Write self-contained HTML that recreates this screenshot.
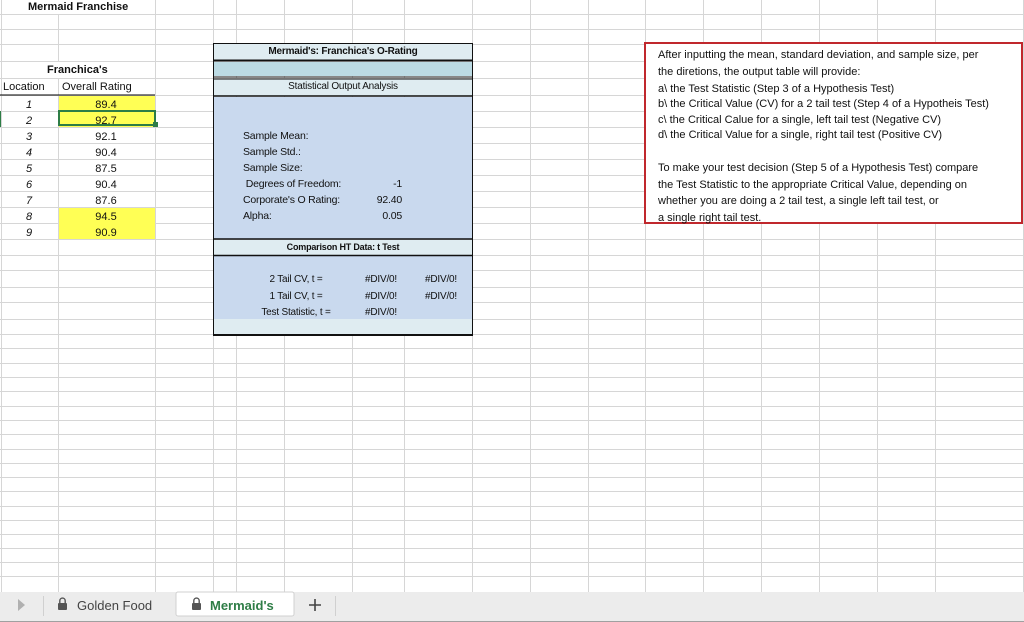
<!DOCTYPE html>
<html><head><meta charset="utf-8"><style>
body{margin:0;width:1024px;height:622px;position:relative;overflow:hidden;background:#fff;font-family:"Liberation Sans",Arial,sans-serif;}
.t{position:absolute;font-size:11px;color:#111;white-space:nowrap;line-height:12px}
.c{font-family:"Liberation Sans",sans-serif;font-size:10px;letter-spacing:-0.2px}
.ctr{text-align:center}
</style></head><body>
<svg width="1024" height="622" style="position:absolute;left:0;top:0">
<g stroke="#d6d6d6" stroke-width="1">
<line x1="1.5" y1="0" x2="1.5" y2="592"/>
<line x1="58.5" y1="0" x2="58.5" y2="592"/>
<line x1="155.5" y1="0" x2="155.5" y2="592"/>
<line x1="213.5" y1="0" x2="213.5" y2="592"/>
<line x1="236.5" y1="0" x2="236.5" y2="592"/>
<line x1="284.5" y1="0" x2="284.5" y2="592"/>
<line x1="352.5" y1="0" x2="352.5" y2="592"/>
<line x1="404.5" y1="0" x2="404.5" y2="592"/>
<line x1="472.5" y1="0" x2="472.5" y2="592"/>
<line x1="530.5" y1="0" x2="530.5" y2="592"/>
<line x1="588.5" y1="0" x2="588.5" y2="592"/>
<line x1="645.5" y1="0" x2="645.5" y2="592"/>
<line x1="703.5" y1="0" x2="703.5" y2="592"/>
<line x1="761.5" y1="0" x2="761.5" y2="592"/>
<line x1="819.5" y1="0" x2="819.5" y2="592"/>
<line x1="877.5" y1="0" x2="877.5" y2="592"/>
<line x1="935.5" y1="0" x2="935.5" y2="592"/>
<line x1="1023.5" y1="0" x2="1023.5" y2="592"/>
</g>
<g stroke="#d6d6d6" stroke-width="1">
<line x1="0" y1="14.5" x2="1024" y2="14.5"/><line x1="0" y1="29.5" x2="1024" y2="29.5"/><line x1="0" y1="44.5" x2="1024" y2="44.5"/><line x1="0" y1="61.5" x2="1024" y2="61.5"/><line x1="0" y1="78.5" x2="1024" y2="78.5"/><line x1="0" y1="95.5" x2="1024" y2="95.5"/><line x1="0" y1="111.5" x2="1024" y2="111.5"/><line x1="0" y1="127.5" x2="1024" y2="127.5"/><line x1="0" y1="143.5" x2="1024" y2="143.5"/><line x1="0" y1="159.5" x2="1024" y2="159.5"/><line x1="0" y1="175.5" x2="1024" y2="175.5"/><line x1="0" y1="191.5" x2="1024" y2="191.5"/><line x1="0" y1="207.5" x2="1024" y2="207.5"/><line x1="0" y1="223.5" x2="1024" y2="223.5"/><line x1="0" y1="239.5" x2="1024" y2="239.5"/><line x1="0" y1="255.5" x2="1024" y2="255.5"/><line x1="0" y1="270.5" x2="1024" y2="270.5"/><line x1="0" y1="287.5" x2="1024" y2="287.5"/><line x1="0" y1="302.5" x2="1024" y2="302.5"/><line x1="0" y1="319.5" x2="1024" y2="319.5"/><line x1="0" y1="334.5" x2="1024" y2="334.5"/><line x1="0" y1="348.5" x2="1024" y2="348.5"/><line x1="0" y1="363.5" x2="1024" y2="363.5"/><line x1="0" y1="377.5" x2="1024" y2="377.5"/><line x1="0" y1="391.5" x2="1024" y2="391.5"/><line x1="0" y1="406.5" x2="1024" y2="406.5"/><line x1="0" y1="420.5" x2="1024" y2="420.5"/><line x1="0" y1="434.5" x2="1024" y2="434.5"/><line x1="0" y1="449.5" x2="1024" y2="449.5"/><line x1="0" y1="463.5" x2="1024" y2="463.5"/><line x1="0" y1="477.5" x2="1024" y2="477.5"/><line x1="0" y1="491.5" x2="1024" y2="491.5"/><line x1="0" y1="506.5" x2="1024" y2="506.5"/><line x1="0" y1="520.5" x2="1024" y2="520.5"/><line x1="0" y1="534.5" x2="1024" y2="534.5"/><line x1="0" y1="548.5" x2="1024" y2="548.5"/><line x1="0" y1="562.5" x2="1024" y2="562.5"/><line x1="0" y1="576.5" x2="1024" y2="576.5"/>
</g>
<rect x="2" y="0" width="153" height="14" fill="#fff"/>
<rect x="2" y="62" width="153" height="16" fill="#fff"/>
<rect x="59" y="96" width="96" height="15" fill="#ffff55"/>
<rect x="59" y="112" width="96" height="15" fill="#ffff55"/>
<rect x="59" y="208" width="96" height="31" fill="#ffff55"/>
<rect x="59" y="111" width="96" height="14" fill="none" stroke="#2e7d46" stroke-width="2"/>
<rect x="153" y="122" width="5" height="5" fill="#2e7d46"/>
<line x1="0" y1="95" x2="155" y2="95" stroke="#000" stroke-width="1"/>
<line x1="0" y1="111" x2="0" y2="127" stroke="#2e7d46" stroke-width="2"/>
<rect x="214" y="44" width="258" height="17" fill="#dfecf1"/>
<rect x="214" y="62" width="258" height="14" fill="#bcdbe4"/>
<rect x="214" y="79" width="258" height="17" fill="#dfecf1"/>
<rect x="214" y="97" width="258" height="142" fill="#c9d9ee"/>
<rect x="214" y="240" width="258" height="15" fill="#dfecf1"/>
<rect x="214" y="256" width="258" height="63" fill="#c9d9ee"/>
<rect x="214" y="319" width="258" height="15" fill="#dfecf1"/>
<g stroke="#111">
<rect x="213.5" y="43.5" width="259" height="291" fill="none" stroke-width="1"/>
<line x1="213" y1="60.5" x2="473" y2="60.5" stroke-width="2"/>
<line x1="213" y1="77" x2="473" y2="77" stroke-width="1"/>
<line x1="213" y1="79" x2="473" y2="79" stroke-width="1"/>
<line x1="213" y1="96" x2="473" y2="96" stroke-width="1.5"/>
<line x1="213" y1="239" x2="473" y2="239" stroke-width="1.5"/>
<line x1="213" y1="255.5" x2="473" y2="255.5" stroke-width="1.5"/>
<line x1="213" y1="335.5" x2="473" y2="335.5" stroke-width="1"/>
</g>
<rect x="645" y="43" width="377" height="180" fill="#fff" stroke="#c0282d" stroke-width="2"/>
<rect x="0" y="592" width="1024" height="30" fill="#ececec"/>
<line x1="0" y1="621.5" x2="1024" y2="621.5" stroke="#a0a0a0"/>
<line x1="43.5" y1="596" x2="43.5" y2="616" stroke="#d0d0d0"/>
<line x1="335.5" y1="596" x2="335.5" y2="616" stroke="#d0d0d0"/>
<rect x="176" y="592" width="118" height="24" rx="2" fill="#fff" stroke="#d0d0d0"/>
<polygon points="18,599 25,605 18,611" fill="#b0b0b0"/>
<g fill="#555"><rect x="58" y="603" width="9" height="7" rx="1"/><path d="M59.8 603v-2.2a2.7 2.7 0 0 1 5.4 0V603" fill="none" stroke="#555" stroke-width="1.4"/>
<rect x="192" y="603" width="9" height="7" rx="1"/><path d="M193.8 603v-2.2a2.7 2.7 0 0 1 5.4 0V603" fill="none" stroke="#555" stroke-width="1.4"/></g>
<path d="M315 599v12M309 605h12" stroke="#444" stroke-width="1.6"/>
</svg>

<div class="t" style="left:28px;top:1px;font-weight:bold">Mermaid Franchise</div>
<div class="t" style="left:47px;top:64px;font-weight:bold">Franchica's</div>
<div class="t" style="left:3px;top:81px">Location</div>
<div class="t" style="left:62px;top:81px">Overall Rating</div>
<div class="t ctr" style="left:0;width:58px;top:97px;font-style:italic;line-height:16px">1<br>2<br>3<br>4<br>5<br>6<br>7<br>8<br>9</div>
<div class="t ctr" style="left:58px;width:96px;top:97px;line-height:16px">89.4<br>92.7<br>92.1<br>90.4<br>87.5<br>90.4<br>87.6<br>94.5<br>90.9</div>

<div class="t c ctr" style="left:213px;width:260px;top:46px;font-weight:bold">Mermaid's: Franchica's O-Rating</div>
<div class="t c ctr" style="left:213px;width:260px;top:81px">Statistical Output Analysis</div>
<div class="t c" style="left:243px;top:128px;line-height:16px;font-size:10.5px">Sample Mean:<br>Sample Std.:<br>Sample Size:<br>&nbsp;Degrees of Freedom:<br>Corporate's O Rating:<br>Alpha:</div>
<div class="t c" style="left:355px;width:47px;top:176px;line-height:16px;text-align:right;font-size:10.5px">-1<br>92.40<br>0.05</div>
<div class="t c ctr" style="left:213px;width:260px;top:241px;font-weight:bold;font-size:9px">Comparison HT Data: t Test</div>
<div class="t c" style="left:246px;width:100px;top:272px;line-height:16.5px;text-align:center">2 Tail CV, t =<br>1 Tail CV, t =<br>Test Statistic, t =</div>
<div class="t c" style="left:350px;width:47px;top:272px;line-height:16.5px;text-align:right">#DIV/0!<br>#DIV/0!<br>#DIV/0!</div>
<div class="t c" style="left:410px;width:47px;top:272px;line-height:16.5px;text-align:right">#DIV/0!<br>#DIV/0!</div>

<div class="t" style="left:658px;top:47px;line-height:17px">After inputting the mean, standard deviation, and sample size, per<br>the diretions, the output table will provide:<br>a\ the Test Statistic (Step 3 of a Hypothesis Test)</div>
<div class="t" style="left:658px;top:97px;line-height:15.5px">b\ the Critical Value (CV) for a 2 tail test (Step 4 of a Hypotheis Test)<br>c\ the Critical Calue for a single, left tail test (Negative CV)<br>d\ the Critical Value for a single, right tail test (Positive CV)</div>
<div class="t" style="left:658px;top:160px;line-height:16.5px">To make your test decision (Step 5 of a Hypothesis Test) compare<br>the Test Statistic to the appropriate Critical Value, depending on<br>whether you are doing a 2 tail test, a single left tail test, or<br>a single right tail test.</div>

<div class="t" style="left:77px;top:598px;font-size:13px;color:#444;line-height:15px">Golden Food</div>
<div class="t" style="left:210px;top:598px;font-size:13px;color:#2e7d46;font-weight:bold;line-height:15px">Mermaid's</div>
</body></html>
